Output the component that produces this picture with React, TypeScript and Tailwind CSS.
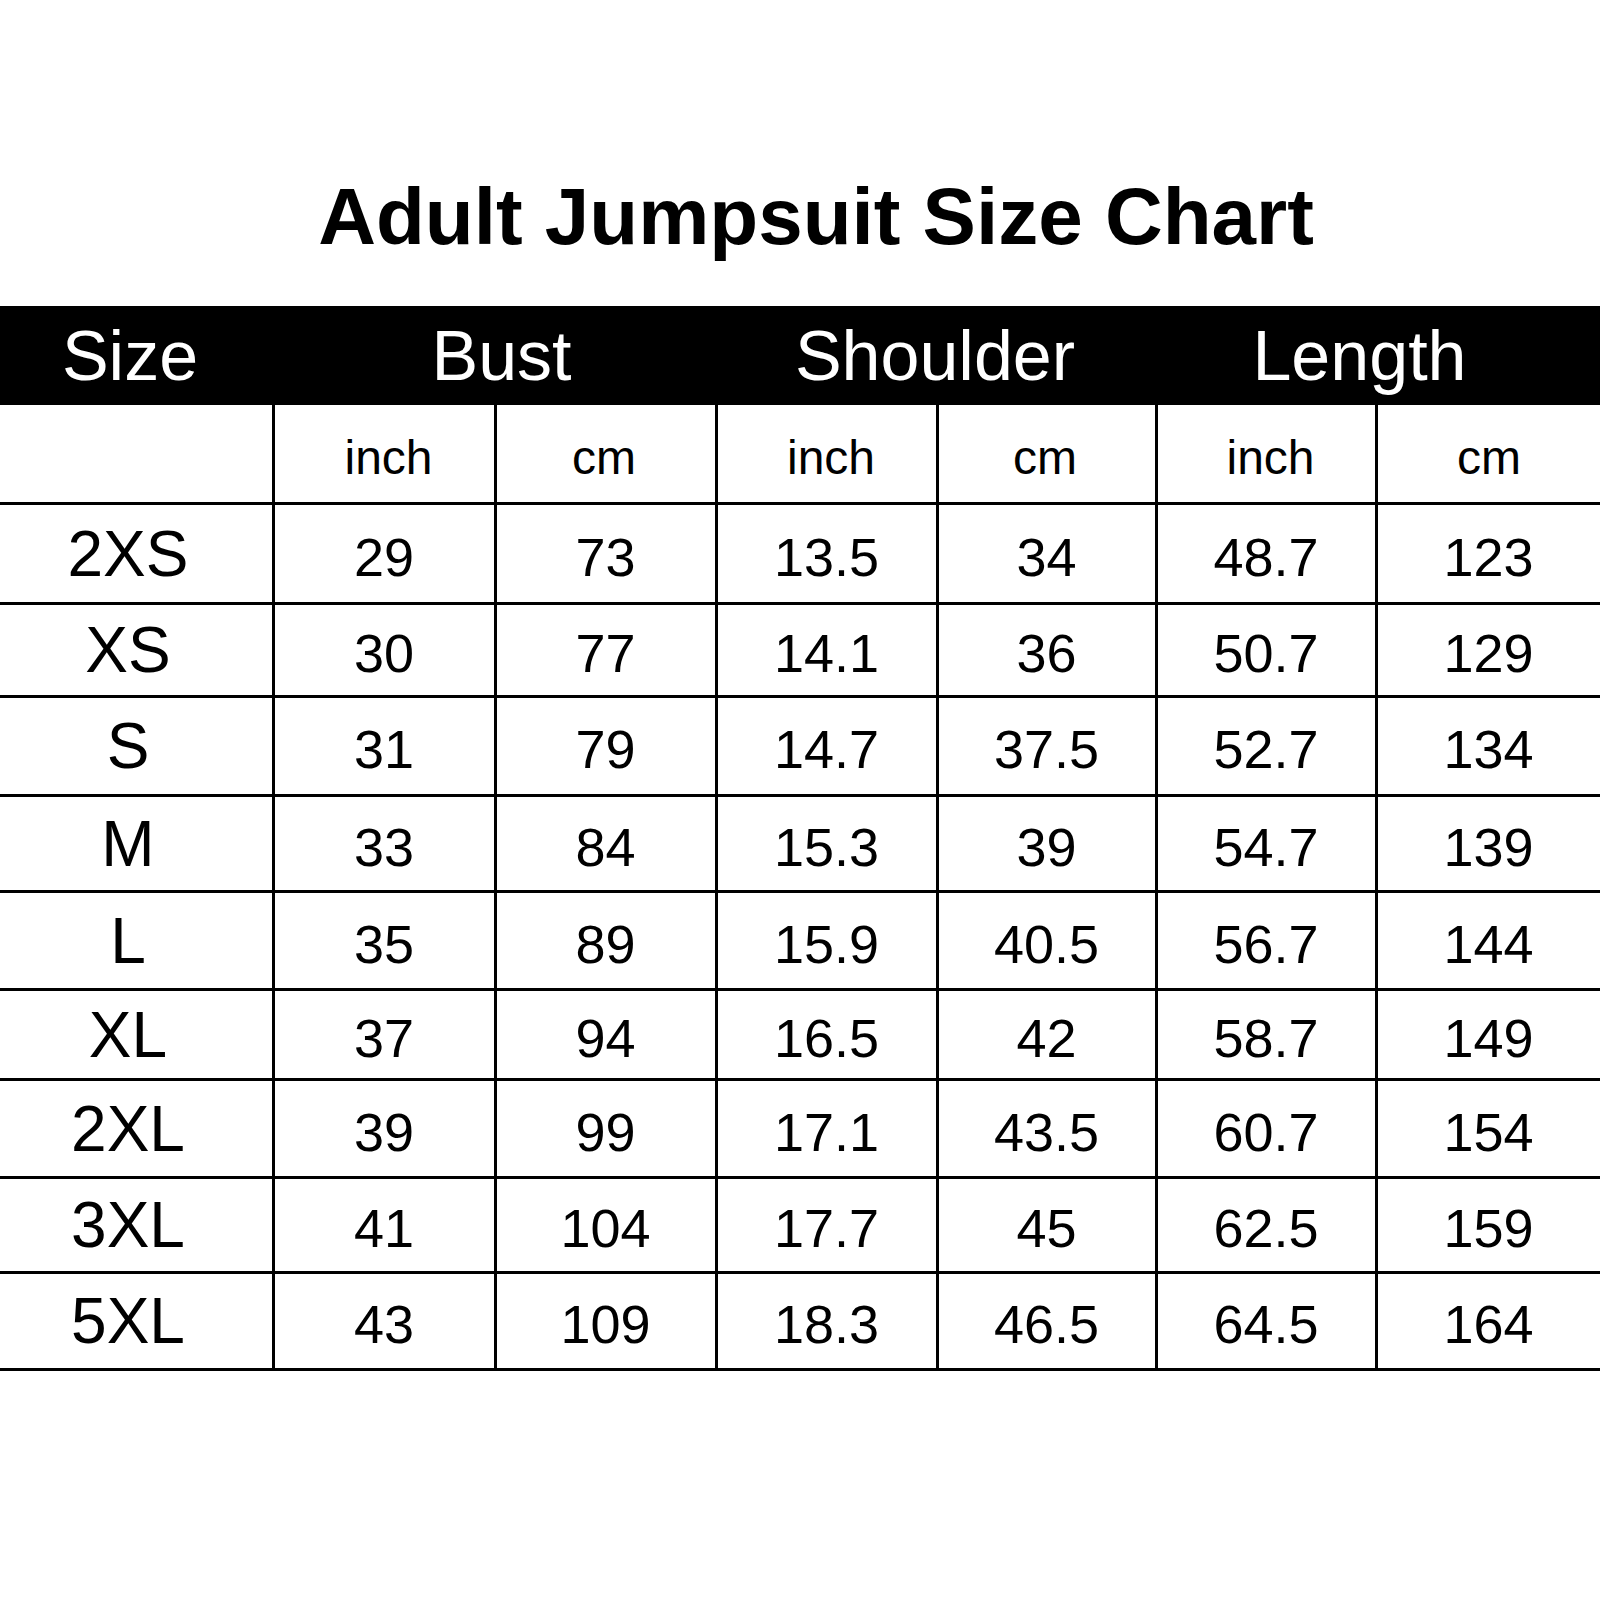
import React from "react";

const rows: { size: string; vals: string[]; h: string }[] = [
  { size: "2XS", vals: ["29", "73", "13.5", "34", "48.7", "123"], h: "h-[100px]" },
  { size: "XS", vals: ["30", "77", "14.1", "36", "50.7", "129"], h: "h-[93px]" },
  { size: "S", vals: ["31", "79", "14.7", "37.5", "52.7", "134"], h: "h-[99px]" },
  { size: "M", vals: ["33", "84", "15.3", "39", "54.7", "139"], h: "h-[96px]" },
  { size: "L", vals: ["35", "89", "15.9", "40.5", "56.7", "144"], h: "h-[98px]" },
  { size: "XL", vals: ["37", "94", "16.5", "42", "58.7", "149"], h: "h-[90px]" },
  { size: "2XL", vals: ["39", "99", "17.1", "43.5", "60.7", "154"], h: "h-[98px]" },
  { size: "3XL", vals: ["41", "104", "17.7", "45", "62.5", "159"], h: "h-[95px]" },
  { size: "5XL", vals: ["43", "109", "18.3", "46.5", "64.5", "164"], h: "h-[97px]" },
];

const grid = "grid grid-cols-[272px_222px_221px_221px_219px_220px_1fr]";

const units = [
  { u: "inch", c: "pl-[8px]" },
  { u: "cm", c: "pr-[4px]" },
  { u: "inch", c: "pl-[8px]" },
  { u: "cm", c: "pr-[4px]" },
  { u: "inch", c: "pl-[8px]" },
  { u: "cm", c: "" },
];

export default function App() {
  return (
    <div
      className="w-[1600px] h-[1600px] bg-white text-black"
      style={{ fontFamily: '"Liberation Sans", Arial, sans-serif' }}
    >
      <div className="h-[306px] pt-[177px] pl-[32px] text-center">
        <h1 className="text-[80px] font-bold leading-none">Adult Jumpsuit Size Chart</h1>
      </div>

      <div className={`${grid} h-[99px] bg-black text-white text-[70px] leading-none`}>
        <div className="flex items-center justify-center pr-[12px]">Size</div>
        <div className="col-span-2 flex items-center justify-center pl-[16px]">Bust</div>
        <div className="col-span-2 flex items-center justify-center">Shoulder</div>
        <div className="col-span-2 flex items-center justify-center pr-[36px]">Length</div>
      </div>

      <div className={`${grid} h-[100px] border-b-[3px] border-black text-[48px] leading-none`}>
        <div />
        {units.map((x, i) => (
          <div
            key={i}
            className={`flex items-center justify-center border-l-[3px] border-black pt-[8px] ${x.c}`}
          >
            {x.u}
          </div>
        ))}
      </div>

      {rows.map((r) => (
        <div key={r.size} className={`${grid} ${r.h} border-b-[3px] border-black leading-none`}>
          <div className="flex items-center justify-center text-[64px] pr-[16px]">{r.size}</div>
          {r.vals.map((v, i) => (
            <div
              key={i}
              className="flex items-center justify-center border-l-[3px] border-black text-[54px] pt-[6px] pr-[1px]"
            >
              {v}
            </div>
          ))}
        </div>
      ))}
    </div>
  );
}
